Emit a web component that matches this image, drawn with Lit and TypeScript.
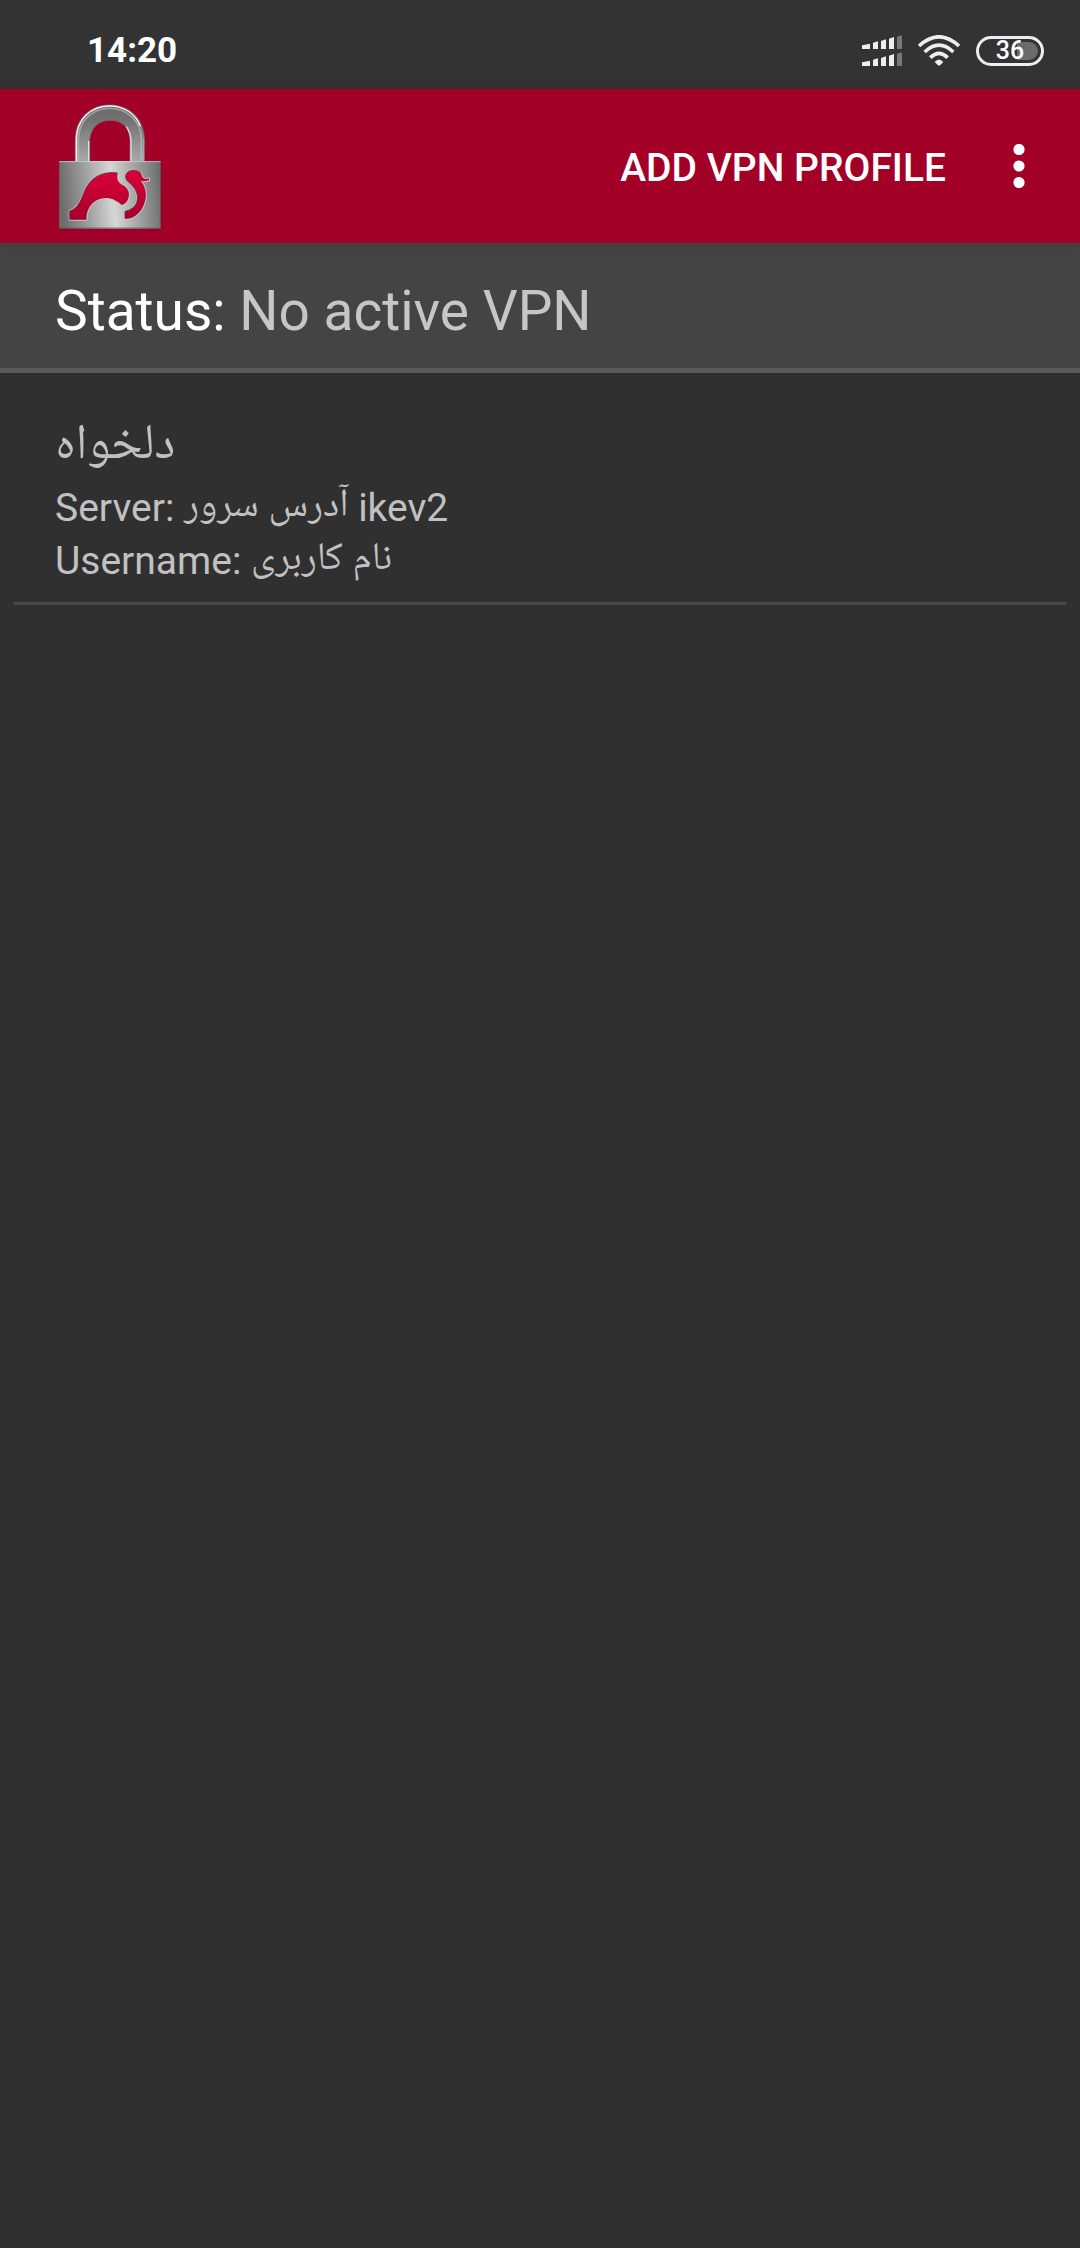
import { LitElement, html, svg, css } from "lit";
import { customElement, property } from "lit/decorators.js";

@customElement("status-bar")
class StatusBar extends LitElement {
  @property() time = "";
  @property({ type: Number }) battery = 0;

  static styles = css`
    :host {
      display: flex;
      align-items: center;
      justify-content: space-between;
      height: 89px;
      box-sizing: border-box;
      padding: 12px 36px 0 87px;
      background: #333333;
      color: #ffffff;
    }
    .time {
      font-size: 35px;
      line-height: 40px;
      font-weight: 700;
    }
    .icons {
      display: flex;
      align-items: center;
      gap: 16px;
    }
    svg {
      display: block;
    }
    .battery {
      display: grid;
      place-items: center;
      width: 68px;
      height: 30px;
    }
    .battery > * {
      grid-area: 1 / 1;
    }
    .level {
      z-index: 1;
      font-size: 25px;
      line-height: 30px;
      font-weight: 500;
    }
  `;

  render() {
    const bars = (y: number) => svg`
      <g transform="translate(0 ${y})">
        <path fill="#eeeeee" d="M0 30 L24 25 V41 H0Z M33 22 L48 18 V41 H33Z M57 17 L72 12 V41 H57Z M81 10 L96 5 V41 H81Z"/>
        <path fill="#777777" d="M105 4 L120 0 V41 H105Z"/>
      </g>`;
    return html`
      <time class="time">${this.time}</time>
      <div class="icons">
        <svg width="40" height="31" viewBox="0 0 120 93" aria-hidden="true">${bars(1)}${bars(52)}</svg>
        <svg width="42" height="31" viewBox="234 44 126 93" aria-hidden="true">
          <g fill="none" stroke="#eeeeee" stroke-width="11">
            <path d="M237 77 Q297 22 357 77"/>
            <path d="M254 95 Q297 54 340 95"/>
            <path d="M271 112 Q297 86 323 112"/>
          </g>
          <path fill="#eeeeee" d="M284 125 Q297 110 310 125 L301 134 Q297 137 293 134Z"/>
        </svg>
        <div class="battery">
          <svg width="68" height="30" viewBox="0 0 68 30" aria-hidden="true">
            <rect x="1.5" y="1.5" width="65" height="27" rx="13.5" fill="none" stroke="#eeeeee" stroke-width="3"/>
            <path fill="#6b6b6b" d="M41 6 H53 A9 9 0 0 1 53 24 H41Z"/>
          </svg>
          <span class="level">${this.battery}</span>
        </div>
      </div>
    `;
  }
}

@customElement("lock-logo")
class LockLogo extends LitElement {
  static styles = css`
    :host,
    svg {
      display: block;
    }
  `;

  render() {
    return html`
      <svg width="104" height="127" viewBox="54 36 312 381" role="img" aria-label="strongSwan">
        <defs>
          <linearGradient id="body" x1="0" y1="0.06" x2="1" y2="0">
            <stop offset="0" stop-color="#6e6e6e"/>
            <stop offset="0.25" stop-color="#a0a0a0"/>
            <stop offset="0.5" stop-color="#d6d6d6"/>
            <stop offset="0.75" stop-color="#a0a0a0"/>
            <stop offset="1" stop-color="#6a6a6a"/>
          </linearGradient>
          <linearGradient id="shackle" x1="0" y1="0" x2="0" y2="1">
            <stop offset="0" stop-color="#686868"/>
            <stop offset="0.3" stop-color="#747474"/>
            <stop offset="0.65" stop-color="#909090"/>
            <stop offset="1" stop-color="#a8a8a8"/>
          </linearGradient>
          <linearGradient id="swan" gradientUnits="userSpaceOnUse" x1="0" y1="240" x2="0" y2="386">
            <stop offset="0" stop-color="#d80038"/>
            <stop offset="0.4" stop-color="#c80034"/>
            <stop offset="1" stop-color="#a30029"/>
          </linearGradient>
        </defs>
        <path fill="url(#shackle)" stroke="#777777" stroke-width="2"
          d="M106 212 V142 C108 82 150 42 209 42 C270 42 311 84 313 142 V212 H270 V148 C269 110 247 88 211 88 C174 88 151 111 149 148 V212Z"/>
        <path fill="none" stroke="#c0c0c0" stroke-width="5" opacity="0.6" d="M115 211 V142 C117 91 156 52 209 52 C262 52 302 91 304 142 V211"/>
        <path fill="none" stroke="#f4f4f4" stroke-width="4" d="M109 211 V142 C111 85 152 45 209 45 C252 45 288 69 301 106"/>
        <path fill="none" stroke="#dcdcdc" stroke-width="4" d="M273 211 V148 C272 132 267 118 259 107 M146 211 V150"/>
        <path fill="none" stroke="#b4b4b4" stroke-width="2" d="M311 211 V142"/>
        <rect x="57" y="211" width="306" height="205" fill="#5c1020" opacity="0.6"/>
        <rect x="57" y="210" width="305" height="203" fill="url(#body)"/>
        <path fill="none" stroke="#e0e0e0" stroke-width="3" opacity="0.6" d="M57 212 H362"/>
        <path fill="none" stroke="#555555" stroke-width="3" opacity="0.7" d="M58 411 H361 V214 M58 411 V214"/>
        <g fill="url(#swan)" stroke="#bccbc6" stroke-width="6" paint-order="stroke" stroke-linejoin="round">
          <path d="M89 386 V360 C112 352 120 334 130 309 C144 273 165 252 201 246 Q218 243 233 246 C229 264 233 275 249 283 C266 293 271 308 264 324 Q260 336 246 342 C230 329 216 321 197 321 C162 322 139 348 139 386Z"/>
          <path d="M255 384 V361 C283 354 295 337 292 314 C290 299 280 285 266 274 C254 264 254 251 264 243 C275 235 294 236 302 246 C306 251 305 257 311 262 Q318 265 327 262 V268 Q313 272 302 270 C313 282 320 300 317 322 C311 358 288 384 255 384Z"/>
        </g>
        <path fill="none" stroke="#5b3a40" stroke-width="3" opacity="0.8"
          d="M89 385 V360 C112 352 120 334 130 309 C144 273 165 252 201 246 Q218 243 233 246 M255 382 V361 C283 354 295 337 292 314 C290 299 280 285 266 274 C254 264 254 251 264 243 C275 235 294 236 302 246"/>
      </svg>
    `;
  }
}

@customElement("profile-list")
class ProfileList extends LitElement {
  @property({ attribute: false }) profiles: { name: string; server: string; suffix: string; username: string }[] = [];

  static styles = css`
    ul {
      list-style: none;
      margin: 0;
      padding: 0 14px;
    }
    li {
      padding: 41px 41px 14px;
      border-bottom: 3px solid #4a4a4a;
      color: #c1c1c1;
      font-size: 39px;
      line-height: 53px;
    }
    h2 {
      margin: 0;
      font-size: 50px;
      line-height: 68px;
      font-weight: 400;
    }
    p {
      margin: 0;
    }
  `;

  render() {
    return html`
      <ul>
        ${this.profiles.map(
          (p) => html`
            <li>
              <h2><bdi lang="fa">${p.name}</bdi></h2>
              <p>Server: <bdi lang="fa">${p.server}</bdi> ${p.suffix}</p>
              <p>Username: <bdi lang="fa">${p.username}</bdi></p>
            </li>
          `
        )}
      </ul>
    `;
  }
}

@customElement("app-root")
class AppRoot extends LitElement {
  static styles = css`
    :host {
      display: flex;
      flex-direction: column;
      min-height: 100vh;
      background: #303030;
      font-family: Roboto, "Noto Naskh Arabic UI", "Noto Naskh Arabic", "Noto Sans Arabic", "DejaVu Sans", sans-serif;
    }
    .toolbar {
      display: flex;
      align-items: center;
      height: 154px;
      box-sizing: border-box;
      padding: 0 26px 0 58px;
      background: #a30028;
      z-index: 1;
      box-shadow: 0 2px 10px rgba(0, 0, 0, 0.12);
    }
    lock-logo {
      margin-right: auto;
    }
    button {
      display: block;
      margin: 0;
      border: 0;
      background: none;
      color: #ffffff;
      font: inherit;
    }
    .add {
      padding: 26px 38px 22px;
      font-size: 39px;
      line-height: 48px;
      font-weight: 500;
    }
    .more {
      padding: 24px;
    }
    .more svg {
      display: block;
    }
    .status {
      padding: 36px 55px 24px;
      background: #444444;
      border-bottom: 5px solid #5a5a5a;
      color: #c6c6c6;
      font-size: 55px;
      line-height: 65px;
    }
    .label {
      color: #ffffff;
    }
  `;

  private profiles = [{ name: "دلخواه", server: "آدرس سرور", suffix: "ikev2", username: "نام کاربری" }];

  render() {
    return html`
      <status-bar time="14:20" battery="36"></status-bar>
      <header class="toolbar">
        <lock-logo></lock-logo>
        <button class="add" type="button">ADD VPN PROFILE</button>
        <button class="more" type="button" aria-label="More options">
          <svg width="22" height="44" viewBox="0 0 22 44" fill="#ffffff" aria-hidden="true">
            <circle cx="11" cy="5.5" r="5.6"/>
            <circle cx="11" cy="22" r="5.6"/>
            <circle cx="11" cy="38.5" r="5.6"/>
          </svg>
        </button>
      </header>
      <section class="status"><span class="label">Status:</span> No active VPN</section>
      <main>
        <profile-list .profiles=${this.profiles}></profile-list>
      </main>
    `;
  }
}
